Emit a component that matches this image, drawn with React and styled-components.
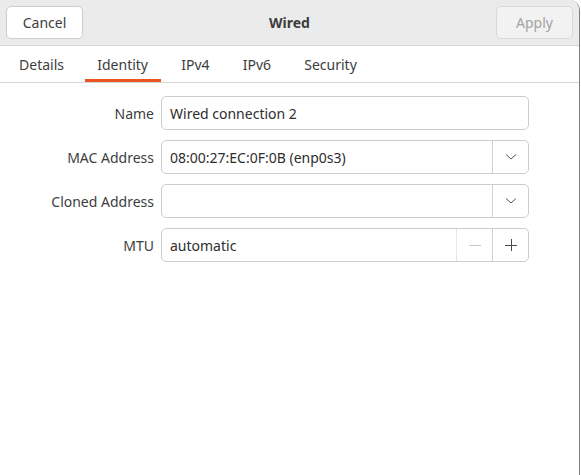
import React from 'react'
import styled, { createGlobalStyle } from 'styled-components'

const GlobalStyle = createGlobalStyle`
  html, body {
    margin: 0;
    padding: 0;
    background: #ffffff;
  }
  body {
    font-family: "Noto Sans", "Open Sans", sans-serif;
    color: #3d3d3d;
  }
`

const Window = styled.div`
  width: 580px;
  height: 475px;
  box-sizing: border-box;
  border-right: 1px solid #7e7e7e;
  border-top-right-radius: 10px;
  overflow: hidden;
  background: #ffffff;
  display: flex;
  flex-direction: column;
`

const HeaderBar = styled.div`
  height: 46px;
  box-sizing: border-box;
  background: #ebebeb;
  border-bottom: 1px solid #d6d6d6;
  display: grid;
  grid-template-columns: 1fr auto 1fr;
  align-items: center;
  padding: 0 6px;
`

const Button = styled.button`
  width: 77px;
  height: 33px;
  box-sizing: border-box;
  border: 1px solid ${(p) => (p.disabled ? '#d8d8d8' : '#cdcdcd')};
  border-radius: 5px;
  background: ${(p) => (p.disabled ? '#f2f2f2' : '#ffffff')};
  color: ${(p) => (p.disabled ? '#a3a3a3' : '#3d3d3d')};
  font-family: inherit;
  font-size: 14px;
  margin-top: -1px;
  justify-self: ${(p) => p.align || 'start'};
`

const Title = styled.div`
  font-weight: bold;
  font-size: 14px;
  color: #3d3d3d;
`

const TabBar = styled.div`
  height: 37px;
  box-sizing: border-box;
  border-bottom: 1px solid #d6d6d6;
  display: flex;
  padding-left: 2.5px;
`

const Tab = styled.div`
  position: relative;
  padding: 0 16.6px;
  display: flex;
  align-items: center;
  font-size: 14px;
  color: #3d3d3d;

  &::after {
    content: '';
    display: ${(p) => (p.active ? 'block' : 'none')};
    position: absolute;
    left: 4px;
    right: 4px;
    bottom: 0;
    height: 3px;
    background: #e95420;
  }
`

const Form = styled.div`
  display: grid;
  grid-template-columns: 154px 368px;
  column-gap: 7px;
  row-gap: 10px;
  padding-top: 13px;
`

const Label = styled.div`
  text-align: right;
  font-size: 14px;
  color: #3d3d3d;
  align-self: center;
`

const Field = styled.div`
  height: 34px;
  box-sizing: border-box;
  border: 1px solid #cdcdcd;
  border-radius: 5px;
  display: flex;
  align-items: stretch;
  background: #ffffff;
`

const Value = styled.div`
  flex: 1;
  display: flex;
  align-items: center;
  padding-left: 8px;
  font-size: 14px;
  color: #2e2e2e;
`

const SideButton = styled.div`
  width: 35px;
  border-left: 1px solid ${(p) => (p.faint ? '#e6e6e6' : '#d2d2d2')};
  display: flex;
  align-items: center;
  justify-content: center;
  color: ${(p) => (p.faint ? '#c8c8c8' : '#4a4a4a')};
`

const Chevron = () => (
  <svg width="12" height="8" viewBox="0 0 12 8">
    <path d="M1 1.5 L6 6 L11 1.5" fill="none" stroke="#555" strokeWidth="1" />
  </svg>
)

const Minus = () => (
  <svg width="14" height="14" viewBox="0 0 14 14">
    <path d="M1 7.5 H13" stroke="currentColor" strokeWidth="1" />
  </svg>
)

const Plus = () => (
  <svg width="14" height="14" viewBox="0 0 14 14">
    <path d="M1 7.5 H13 M7.5 1 V13" stroke="currentColor" strokeWidth="1" />
  </svg>
)

const tabs = ['Details', 'Identity', 'IPv4', 'IPv6', 'Security']

const App = () => {
  return (
    <>
      <GlobalStyle />
      <Window>
        <HeaderBar>
          <Button>Cancel</Button>
          <Title>Wired</Title>
          <Button disabled align="end">Apply</Button>
        </HeaderBar>
        <TabBar>
          {tabs.map((t) => (
            <Tab key={t} active={t === 'Identity'}>{t}</Tab>
          ))}
        </TabBar>
        <Form>
          <Label>Name</Label>
          <Field>
            <Value>Wired connection 2</Value>
          </Field>

          <Label>MAC Address</Label>
          <Field>
            <Value>08:00:27:EC:0F:0B (enp0s3)</Value>
            <SideButton><Chevron /></SideButton>
          </Field>

          <Label>Cloned Address</Label>
          <Field>
            <Value />
            <SideButton><Chevron /></SideButton>
          </Field>

          <Label>MTU</Label>
          <Field>
            <Value>automatic</Value>
            <SideButton faint><Minus /></SideButton>
            <SideButton><Plus /></SideButton>
          </Field>
        </Form>
      </Window>
    </>
  )
}

export default App
